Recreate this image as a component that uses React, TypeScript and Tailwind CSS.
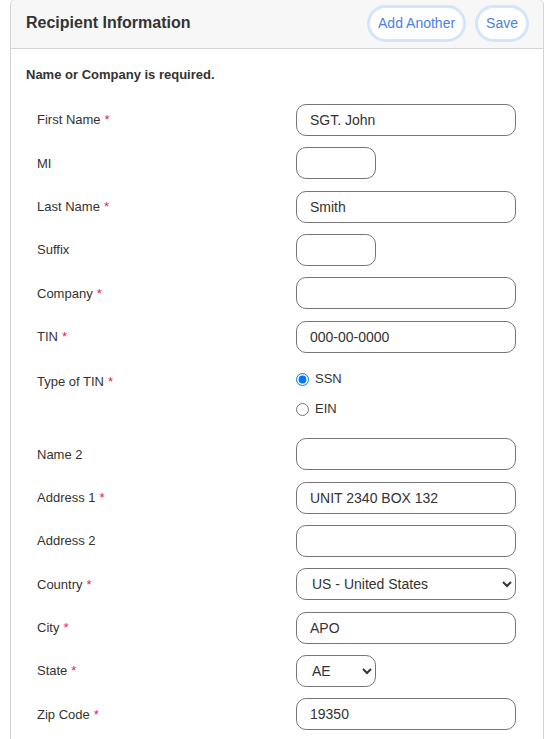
import React from 'react';

type Field = {
  label: string;
  required?: boolean;
  kind: 'text' | 'small' | 'select' | 'smallSelect' | 'radio';
  value?: string;
};

const fields: Field[] = [
  { label: 'First Name', required: true, kind: 'text', value: 'SGT. John' },
  { label: 'MI', kind: 'small' },
  { label: 'Last Name', required: true, kind: 'text', value: 'Smith' },
  { label: 'Suffix', kind: 'small' },
  { label: 'Company', required: true, kind: 'text' },
  { label: 'TIN', required: true, kind: 'text', value: '000-00-0000' },
  { label: 'Type of TIN', required: true, kind: 'radio' },
  { label: 'Name 2', kind: 'text' },
  { label: 'Address 1', required: true, kind: 'text', value: 'UNIT 2340 BOX 132' },
  { label: 'Address 2', kind: 'text' },
  { label: 'Country', required: true, kind: 'select', value: 'US - United States' },
  { label: 'City', required: true, kind: 'text', value: 'APO' },
  { label: 'State', required: true, kind: 'smallSelect', value: 'AE' },
  { label: 'Zip Code', required: true, kind: 'text', value: '19350' },
];

const inputBase =
  'h-[32px] rounded-[10px] border border-[#767676] bg-white px-[13px] text-[14px] text-[#333] outline-none';

function Control({ field }: { field: Field }) {
  if (field.kind === 'radio') {
    return (
      <div className="flex h-[63px] flex-col">
        <label className="flex h-[30px] items-center gap-[6px] text-[13px] text-[#333]">
          <input type="radio" name="tin" defaultChecked className="m-0 h-[13px] w-[13px] accent-[#0075ff]" />
          SSN
        </label>
        <label className="flex h-[30px] items-center gap-[6px] text-[13px] text-[#333]">
          <input type="radio" name="tin" className="m-0 h-[13px] w-[13px]" />
          EIN
        </label>
      </div>
    );
  }
  if (field.kind === 'select' || field.kind === 'smallSelect') {
    return (
      <select
        defaultValue={field.value}
        className={`${inputBase} ${field.kind === 'select' ? 'w-[220px]' : 'w-[80px]'} pl-[11px] pr-[6px] text-[13px]`}
      >
        <option>{field.value}</option>
      </select>
    );
  }
  return (
    <input
      type="text"
      defaultValue={field.value ?? ''}
      className={`${inputBase} ${field.kind === 'small' ? 'w-[80px]' : 'w-[220px]'}`}
    />
  );
}

export default function App() {
  return (
    <div className="min-h-[739px] bg-white" style={{ fontFamily: '"Liberation Sans", Arial, sans-serif' }}>
      <div className="-mt-px ml-[10px] w-[534px] rounded-t-[6px] border border-[#d4d4d4]">
        {/* Header */}
        <div className="flex h-[49px] items-center justify-between rounded-t-[6px] border-b border-[#d4d4d4] bg-[#f7f7f7] pl-[15px] pr-[14px]">
          <h2 className="-mt-[2px] text-[16px] font-bold text-[#333]">Recipient Information</h2>
          <div className="-mt-[2px] flex items-center gap-[9px]">
            <button className="h-[37px] rounded-full border-[3px] border-[#d6e4fb] bg-white px-[8px] text-[14px] text-[#4b80e8]">
              Add Another
            </button>
            <button className="h-[37px] rounded-full border-[3px] border-[#d6e4fb] bg-white px-[8px] text-[14px] text-[#4b80e8]">
              Save
            </button>
          </div>
        </div>

        {/* Body */}
        <div className="px-[15px] pt-[17px] pb-[20px]">
          <p className="text-[13px] font-bold leading-[18px] text-[#333]">Name or Company is required.</p>
          <div className="mt-[20px] flex flex-col gap-[11.35px] pl-[11px]">
            {fields.map((f) => (
              <div key={f.label} className={`flex ${f.kind === 'radio' ? 'items-start' : 'items-center'}`}>
                <div
                  className={`w-[259px] shrink-0 text-[13px] text-[#333] ${f.kind === 'radio' ? 'pt-[8px]' : ''}`}
                >
                  {f.label}
                  {f.required && <span className="ml-[4px] text-[#e0245e]">*</span>}
                </div>
                <Control field={f} />
              </div>
            ))}
          </div>
        </div>
      </div>
    </div>
  );
}
